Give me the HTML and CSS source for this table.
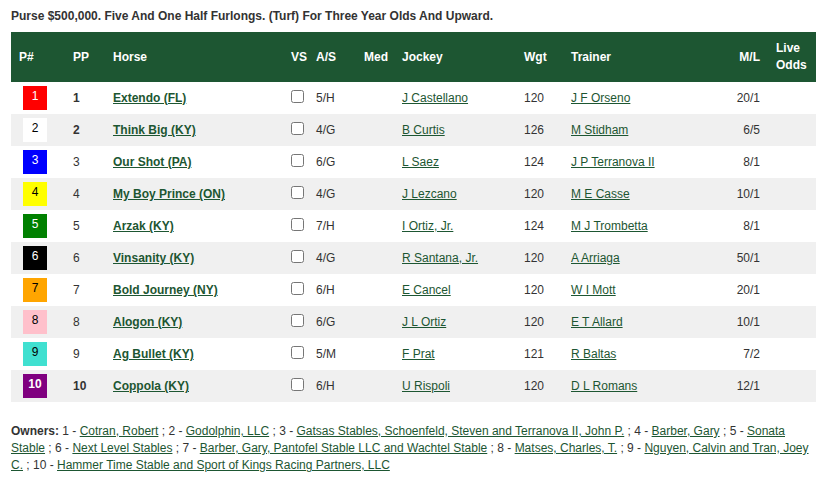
FILE: index.html
```html
<!DOCTYPE html>
<html>
<head>
<meta charset="utf-8">
<link rel="stylesheet" href="styles.css">
</head>
<body>
<div class="page">
  <div class="purse">Purse $500,000. Five And One Half Furlongs. (Turf) For Three Year Olds And Upward.</div>
  <table class="entries">
    <colgroup>
      <col class="c-pn"><col class="c-pp"><col class="c-horse"><col class="c-vs"><col class="c-as"><col class="c-med"><col class="c-jockey"><col class="c-wgt"><col class="c-trainer"><col class="c-ml"><col class="c-live">
    </colgroup>
    <thead>
      <tr>
        <th>P#</th><th>PP</th><th>Horse</th><th>VS</th><th>A/S</th><th>Med</th><th>Jockey</th><th>Wgt</th><th>Trainer</th><th class="r">M/L</th><th>Live Odds</th>
      </tr>
    </thead>
    <tbody>
      <tr><td><span class="pn red">1</span></td><td class="b">1</td><td><a class="horse" href="#">Extendo (FL)</a></td><td><input type="checkbox"></td><td>5/H</td><td></td><td><a href="#">J Castellano</a></td><td>120</td><td><a href="#">J F Orseno</a></td><td class="r">20/1</td><td></td></tr>
      <tr><td><span class="pn white">2</span></td><td class="b">2</td><td><a class="horse" href="#">Think Big (KY)</a></td><td><input type="checkbox"></td><td>4/G</td><td></td><td><a href="#">B Curtis</a></td><td>126</td><td><a href="#">M Stidham</a></td><td class="r">6/5</td><td></td></tr>
      <tr><td><span class="pn blue">3</span></td><td>3</td><td><a class="horse" href="#">Our Shot (PA)</a></td><td><input type="checkbox"></td><td>6/G</td><td></td><td><a href="#">L Saez</a></td><td>124</td><td><a href="#">J P Terranova II</a></td><td class="r">8/1</td><td></td></tr>
      <tr><td><span class="pn yellow">4</span></td><td>4</td><td><a class="horse" href="#">My Boy Prince (ON)</a></td><td><input type="checkbox"></td><td>4/G</td><td></td><td><a href="#">J Lezcano</a></td><td>120</td><td><a href="#">M E Casse</a></td><td class="r">10/1</td><td></td></tr>
      <tr><td><span class="pn green">5</span></td><td>5</td><td><a class="horse" href="#">Arzak (KY)</a></td><td><input type="checkbox"></td><td>7/H</td><td></td><td><a href="#">I Ortiz, Jr.</a></td><td>124</td><td><a href="#">M J Trombetta</a></td><td class="r">8/1</td><td></td></tr>
      <tr><td><span class="pn black">6</span></td><td>6</td><td><a class="horse" href="#">Vinsanity (KY)</a></td><td><input type="checkbox"></td><td>4/G</td><td></td><td><a href="#">R Santana, Jr.</a></td><td>120</td><td><a href="#">A Arriaga</a></td><td class="r">50/1</td><td></td></tr>
      <tr><td><span class="pn orange">7</span></td><td>7</td><td><a class="horse" href="#">Bold Journey (NY)</a></td><td><input type="checkbox"></td><td>6/H</td><td></td><td><a href="#">E Cancel</a></td><td>120</td><td><a href="#">W I Mott</a></td><td class="r">20/1</td><td></td></tr>
      <tr><td><span class="pn pink">8</span></td><td>8</td><td><a class="horse" href="#">Alogon (KY)</a></td><td><input type="checkbox"></td><td>6/G</td><td></td><td><a href="#">J L Ortiz</a></td><td>120</td><td><a href="#">E T Allard</a></td><td class="r">10/1</td><td></td></tr>
      <tr><td><span class="pn turq">9</span></td><td>9</td><td><a class="horse" href="#">Ag Bullet (KY)</a></td><td><input type="checkbox"></td><td>5/M</td><td></td><td><a href="#">F Prat</a></td><td>121</td><td><a href="#">R Baltas</a></td><td class="r">7/2</td><td></td></tr>
      <tr><td><span class="pn purple">10</span></td><td class="b">10</td><td><a class="horse" href="#">Coppola (KY)</a></td><td><input type="checkbox"></td><td>6/H</td><td></td><td><a href="#">U Rispoli</a></td><td>120</td><td><a href="#">D L Romans</a></td><td class="r">12/1</td><td></td></tr>
    </tbody>
  </table>
  <p class="owners"><b>Owners:</b> 1 - <a href="#">Cotran, Robert</a> ; 2 - <a href="#">Godolphin, LLC</a> ; 3 - <a href="#">Gatsas Stables, Schoenfeld, Steven and Terranova II, John P.</a> ; 4 - <a href="#">Barber, Gary</a> ; 5 - <a href="#">Sonata Stable</a> ; 6 - <a href="#">Next Level Stables</a> ; 7 - <a href="#">Barber, Gary, Pantofel Stable LLC and Wachtel Stable</a> ; 8 - <a href="#">Matses, Charles, T.</a> ; 9 - <a href="#">Nguyen, Calvin and Tran, Joey C.</a> ; 10 - <a href="#">Hammer Time Stable and Sport of Kings Racing Partners, LLC</a></p>
</div>
</body>
</html>
```
FILE: styles.css
```css
html, body {
  margin: 0;
  padding: 0;
  background: #fff;
}
body {
  font-family: "Liberation Sans", Arial, sans-serif;
  font-size: 12px;
  color: #333;
}
.page {
  padding: 9px 11px 0 11px;
}
.purse {
  font-weight: bold;
  line-height: 14px;
  margin-bottom: 9px;
}
.entries {
  width: 805px;
  border-collapse: collapse;
  table-layout: fixed;
}
.c-pn { width: 54px; }
.c-pp { width: 40px; }
.c-horse { width: 178px; }
.c-vs { width: 25px; }
.c-as { width: 48px; }
.c-med { width: 38px; }
.c-jockey { width: 122px; }
.c-wgt { width: 47px; }
.c-trainer { width: 137px; }
.c-ml { width: 68px; }
.c-live { width: 48px; }
.entries thead tr {
  background: #1d5632;
  height: 50px;
}
.entries th {
  color: #fff;
  font-weight: bold;
  text-align: left;
  padding: 0 0 0 8px;
  line-height: 17px;
  vertical-align: middle;
}
.entries th.r, .entries td.r {
  text-align: right;
  padding-right: 8px;
}
.entries tbody tr {
  height: 32px;
}
.entries tbody tr:nth-child(even) {
  background: #f0f0f0;
}
.entries td {
  padding: 0 0 0 8px;
  vertical-align: middle;
  white-space: nowrap;
}
.entries td.b {
  font-weight: bold;
}
.entries input[type="checkbox"] {
  margin: 0;
  width: 13px;
  height: 13px;
  position: relative;
  top: -2px;
  vertical-align: middle;
}
a {
  color: #1d5632;
  text-decoration: underline;
}
a.horse {
  font-weight: bold;
}
.pn {
  display: block;
  width: 24px;
  height: 24px;
  margin-left: 4px;
  text-align: center;
  line-height: 20px;
  box-sizing: border-box;
}
.red { background: #ff0000; color: #fff; }
.white { background: #fff; color: #000; }
.blue { background: #0000ff; color: #fff; }
.yellow { background: #ffff00; color: #000; }
.green { background: #008000; color: #fff; }
.black { background: #000; color: #fff; }
.orange { background: #ffa500; color: #000; }
.pink { background: #ffc0cb; color: #000; }
.turq { background: #40e0d0; color: #000; }
.purple { background: #800080; color: #fff; font-weight: bold; }
.owners {
  margin: 21px 0 0 0;
  line-height: 17px;
}
```
